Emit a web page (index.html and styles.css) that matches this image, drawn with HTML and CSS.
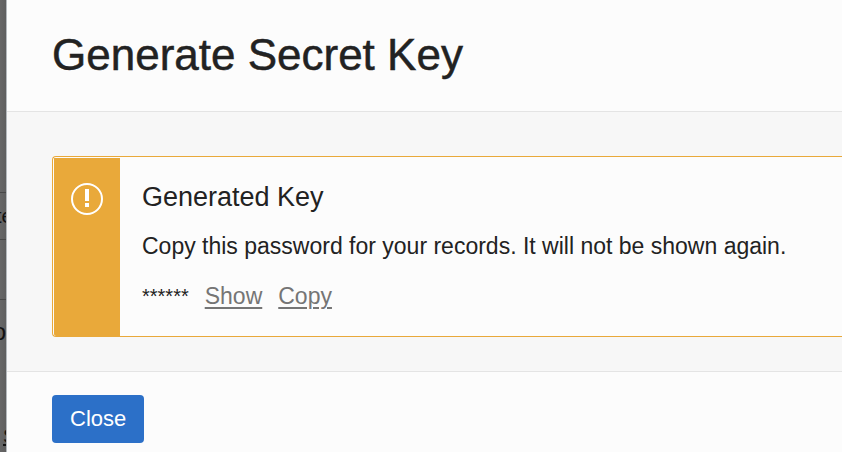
FILE: index.html
```
<!DOCTYPE html>
<html lang="en">
<head>
<meta charset="utf-8">
<title>Generate Secret Key</title>
<link rel="stylesheet" href="styles.css">
</head>
<body>
<div class="page">
  <div class="backdrop" aria-hidden="true">
    <div class="row row-top"></div>
    <div class="row row-label"><span>te</span></div>
    <div class="row row-gap"></div>
    <div class="row-rest"><span class="strong">o</span><span class="link">S</span></div>
  </div>
  <main class="dialog" role="dialog" aria-labelledby="title">
    <header class="dialog-header"><h1 id="title">Generate Secret Key</h1></header>
    <div class="dialog-body">
      <section class="notice">
        <div class="notice-stripe">
          <svg class="notice-icon" viewBox="0 0 32 32" aria-hidden="true">
            <circle cx="16" cy="16" r="15" fill="none" stroke="#fff" stroke-width="2"/>
            <path d="M14 6h4v12h-4zM14 20h4v4h-4z" fill="#fff"/>
          </svg>
        </div>
        <div class="notice-content">
          <h2>Generated Key</h2>
          <p>Copy this password for your records. It will not be shown again.</p>
          <div class="secret">
            <span class="mask">******</span>
            <a href="#show">Show</a>
            <a href="#copy">Copy</a>
          </div>
        </div>
      </section>
    </div>
    <footer class="dialog-footer"><button type="button" class="close">Close</button></footer>
  </main>
</div>
</body>
</html>
```
FILE: styles.css
```
* { box-sizing: border-box; }
body {
  margin: 0;
  overflow: hidden;
  background: #fcfcfc;
  color: #222;
  font-family: "Liberation Sans", Arial, sans-serif;
  font-size: 23px;
}
h1, h2, p { margin: 0; font-weight: 400; }
.page { display: flex; height: 100vh; }
.backdrop {
  flex: 0 0 7px;
  display: flex;
  flex-direction: column;
  overflow: hidden;
  background: linear-gradient(90deg, #676767, #5f5f5f);
  border-right: 1px solid #b4b9bd;
  color: #111;
  font-size: 20px;
}
.row { border-bottom: 1px solid #484848; }
.row, .row-rest { display: flex; flex-shrink: 0; }
.row-top { height: 193px; }
.row-label { height: 47px; margin-left: -4px; line-height: 46px; }
.row-gap { height: 60px; }
.row-rest { flex-direction: column; align-items: flex-end; gap: 72px; padding-top: 16px; line-height: 32px; }
.strong { font-size: 24px; }
.link { align-self: flex-start; margin-left: 3px; text-decoration: underline; }
.dialog { flex: 1; min-width: 0; }
.dialog-header { padding: 29px 45px 30px; border-bottom: 1px solid #e4e4e4; }
h1 { font-size: 44px; line-height: 52px; white-space: nowrap; -webkit-text-stroke: 0.5px; }
.dialog-body { padding: 44px 0 34px 45px; background: #f7f7f7; border-bottom: 1px solid #e4e4e4; }
.notice {
  display: flex;
  padding: 1px 0 0 1px;
  background: #fcfcfc;
  border: 1px solid #e9a93a;
  border-right: 0;
  border-radius: 4px 0 0 4px;
}
.notice-stripe { flex: 0 0 66px; padding: 25px 17px; background: #e9a93a; border-radius: 0 0 0 2px; }
.notice-icon { display: block; width: 32px; height: 32px; }
.notice-content { flex: 1; padding: 22px 22px 24px; white-space: nowrap; }
h2 { font-size: 27px; line-height: 34px; }
p { margin-top: 16px; line-height: 32px; }
.secret { display: flex; gap: 16px; margin-top: 18px; line-height: 32px; }
.mask { font-size: 20px; }
.secret a { color: #757575; text-underline-offset: 3px; text-decoration-thickness: 2px; }
.dialog-footer { padding: 23px 45px; }
.close {
  padding: 0 18px;
  border: 0;
  border-radius: 4px;
  background: #2c70c8;
  color: #fff;
  font: 22px/48px "Liberation Sans", Arial, sans-serif;
}
```
